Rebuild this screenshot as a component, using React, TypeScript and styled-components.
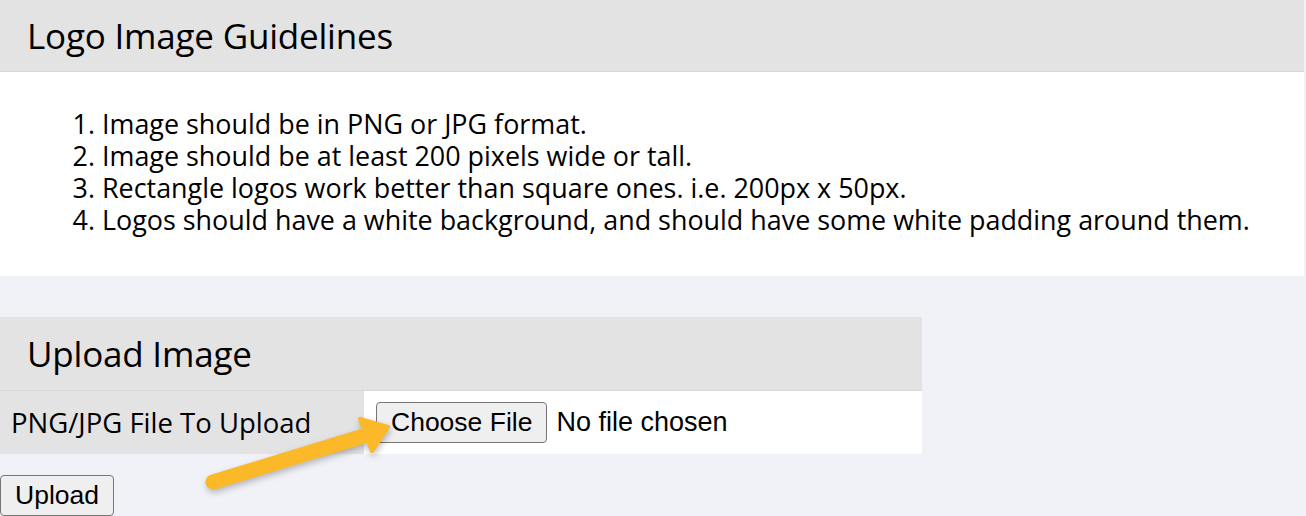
import React from 'react';
import styled, { createGlobalStyle } from 'styled-components';

const GlobalStyle = createGlobalStyle`
  html, body {
    margin: 0;
    padding: 0;
    background: #f1f2f7;
  }
  body {
    font-family: 'Open Sans', 'Noto Sans', sans-serif;
    color: #000;
  }
`;

const Page = styled.div`
  position: relative;
  width: 1306px;
  height: 516px;
  overflow: hidden;
`;

const GuidePanel = styled.section`
  width: 1304px;
  background: #fff;
`;

const PanelHeader = styled.h2`
  margin: 0;
  height: 72px;
  box-sizing: border-box;
  padding: 0 0 1px 27px;
  display: flex;
  align-items: center;
  background: #e3e3e3;
  border-bottom: 1px solid #d8d8d8;
  font-size: 35px;
  font-weight: 400;
  letter-spacing: -0.2px;
`;

const GuideBody = styled.div`
  height: 204px;
  box-sizing: border-box;
  padding-top: 36px;
`;

const GuideList = styled.ol`
  margin: 0;
  padding-left: 102px;
  font-size: 26.9px;
  line-height: 32px;
`;

const UploadTable = styled.table`
  margin-top: 41px;
  width: 922px;
  border-collapse: collapse;
`;

const TableHeader = styled.th`
  height: 73px;
  padding: 0 0 0 27px;
  text-align: left;
  background: #e3e3e3;
  border-bottom: 1px solid #d8d8d8;
  font-size: 35px;
  font-weight: 400;
  letter-spacing: -0.2px;
`;

const Cell = styled.td<{ $shade?: boolean }>`
  height: 63px;
  padding: 0 0 0 ${p => (p.$shade ? '11px' : '12px')};
  width: ${p => (p.$shade ? '353px' : 'auto')};
  background: ${p => (p.$shade ? '#e3e3e3' : '#fff')};
  font-size: 27.5px;
  line-height: 34px;
  vertical-align: middle;
  border-top: 1px solid #f1f2f7;
`;

const FileRow = styled.div`
  display: flex;
  align-items: center;
  gap: 9px;
  font-family: 'Liberation Sans', Arial, sans-serif;
  font-size: 27px;
  line-height: normal;
`;

const NativeButton = styled.button`
  font-family: 'Liberation Sans', Arial, sans-serif;
  font-size: 26.5px;
  color: #000;
  background: #efefef;
  border: 1px solid #767676;
  border-radius: 4px;
  padding: 0 14px;
  height: 41px;
  white-space: nowrap;
`;

const UploadButton = styled(NativeButton)`
  display: block;
  margin-top: 21px;
  padding: 0;
  width: 114px;
`;

const Arrow = styled.svg`
  position: absolute;
  left: 195px;
  top: 405px;
  overflow: visible;
  filter: drop-shadow(1px 3px 3px rgba(0, 0, 0, 0.25));
`;

const guidelines = [
  'Image should be in PNG or JPG format.',
  'Image should be at least 200 pixels wide or tall.',
  'Rectangle logos work better than square ones. i.e. 200px x 50px.',
  'Logos should have a white background, and should have some white padding around them.',
];

export default function App() {
  return (
    <>
      <GlobalStyle />
      <Page>
        <GuidePanel>
          <PanelHeader>Logo Image Guidelines</PanelHeader>
          <GuideBody>
            <GuideList>
              {guidelines.map(g => (
                <li key={g}>{g}</li>
              ))}
            </GuideList>
          </GuideBody>
        </GuidePanel>

        <UploadTable>
          <thead>
            <tr>
              <TableHeader colSpan={2}>Upload Image</TableHeader>
            </tr>
          </thead>
          <tbody>
            <tr>
              <Cell $shade>PNG/JPG File To Upload</Cell>
              <Cell>
                <FileRow>
                  <NativeButton type="button">Choose File</NativeButton>
                  <span>No file chosen</span>
                </FileRow>
              </Cell>
            </tr>
          </tbody>
        </UploadTable>

        <UploadButton type="button">Upload</UploadButton>

        <Arrow width="200" height="90" viewBox="0 0 200 90">
          <line x1="18" y1="77" x2="172" y2="30" stroke="#fbb829" strokeWidth="15" strokeLinecap="round" />
          <path d="M193 22 L165 14 L177 46 Z" fill="#fbb829" stroke="#fbb829" strokeWidth="4" strokeLinejoin="round" />
        </Arrow>
      </Page>
    </>
  );
}
